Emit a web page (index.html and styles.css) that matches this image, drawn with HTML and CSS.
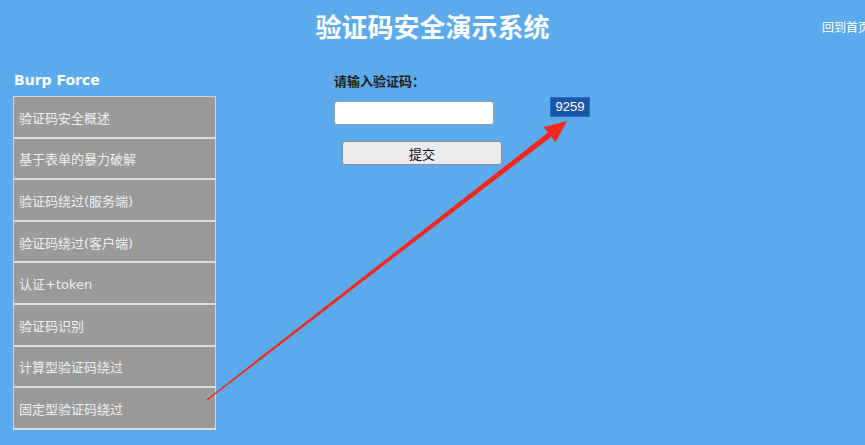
FILE: index.html
```html
<!DOCTYPE html>
<html lang="zh">
<head>
<meta charset="utf-8">
<title>验证码安全演示系统</title>
<link rel="stylesheet" href="styles.css">
</head>
<body>
<header class="header">
  <h1 class="title">验证码安全演示系统</h1>
  <a class="home" href="#">回到首页</a>
</header>
<main class="main">
  <aside class="sidebar">
    <h3 class="side-title">Burp Force</h3>
    <ul class="menu">
      <li class="menu-item">验证码安全概述</li>
      <li class="menu-item">基于表单的暴力破解</li>
      <li class="menu-item">验证码绕过(服务端)</li>
      <li class="menu-item">验证码绕过(客户端)</li>
      <li class="menu-item">认证+token</li>
      <li class="menu-item">验证码识别</li>
      <li class="menu-item">计算型验证码绕过</li>
      <li class="menu-item">固定型验证码绕过</li>
    </ul>
  </aside>
  <section class="content">
    <div class="label">请输入验证码：</div>
    <div class="row">
      <input class="code-input" type="text">
      <span class="captcha">9259</span>
    </div>
    <button class="submit" type="button">提交</button>
  </section>
</main>
<svg class="arrow" width="865" height="445" viewBox="0 0 865 445">
  <polygon fill="#f8261a" points="567,121 555.5,142 551.3,136.8 207.4,400.6 206.6,399.4 548.1,132.6 543.5,127.2"/>
</svg>
</body>
</html>
```
FILE: styles.css
```css
html, body {
  margin: 0;
  padding: 0;
}
body {
  width: 865px;
  height: 445px;
  overflow: hidden;
  background: #5aaaec;
  font-family: "DejaVu Sans", "Noto Sans CJK SC", sans-serif;
  position: relative;
}
.header {
  height: 52px;
  display: flex;
  align-items: center;
  justify-content: center;
}
.title {
  margin: 0;
  font-size: 26px;
  font-weight: bold;
  color: #ffffff;
  font-family: "Noto Sans CJK SC", sans-serif;
  line-height: 30px;
  padding-left: 0;
}
.home {
  position: absolute;
  left: 822px;
  top: 18px;
  font-size: 12px;
  line-height: 18px;
  color: #ffffff;
  text-decoration: none;
  white-space: nowrap;
  font-family: "Noto Sans CJK SC", sans-serif;
}
.main {
  display: flex;
  padding-left: 13px;
}
.sidebar {
  width: 203px;
  padding-top: 18px;
}
.side-title {
  margin: 0 0 6px 1px;
  font-size: 14px;
  line-height: 20px;
  color: #ffffff;
  font-weight: bold;
}
.menu {
  list-style: none;
  margin: 0;
  padding: 0;
  border-top: 1px solid #d6d6d6;
}
.menu-item {
  box-sizing: border-box;
  height: 41.6px;
  display: flex;
  align-items: center;
  padding-left: 5px;
  padding-top: 1px;
  background: #9a9a9a;
  border-left: 1px solid #d6d6d6;
  border-right: 1px solid #d6d6d6;
  border-bottom: 2px solid #dcdcdc;
  color: #eeeeee;
  font-size: 13px;
}
.content {
  margin-left: 118px;
  padding-top: 19px;
}
.label {
  font-size: 13px;
  line-height: 20px;
  font-weight: bold;
  color: #1e1e1e;
  font-family: "Noto Sans CJK SC", sans-serif;
}
.row {
  display: flex;
  align-items: flex-start;
  margin-top: 10px;
}
.code-input {
  box-sizing: border-box;
  width: 160px;
  height: 24px;
  margin: 0;
  border: 1px solid #9a9a9a;
  border-radius: 3px;
  background: #ffffff;
}
.captcha {
  margin-left: 56px;
  margin-top: -4px;
  width: 40px;
  height: 20px;
  box-sizing: border-box;
  background: #1a56a5;
  border: 1px solid #2a6bbd;
  color: #ffffff;
  font-size: 13px;
  line-height: 18px;
  text-align: center;
  font-family: "Liberation Sans", sans-serif;
}
.submit {
  display: block;
  box-sizing: border-box;
  margin: 16px 0 0 8px;
  width: 160px;
  height: 24px;
  background: #ebebee;
  border: 1px solid #8f8f8f;
  border-radius: 3px;
  font-size: 13px;
  color: #111111;
  font-family: "Noto Sans CJK SC", sans-serif;
  padding: 0;
}
.arrow {
  position: absolute;
  left: 0;
  top: 0;
  pointer-events: none;
}
```
